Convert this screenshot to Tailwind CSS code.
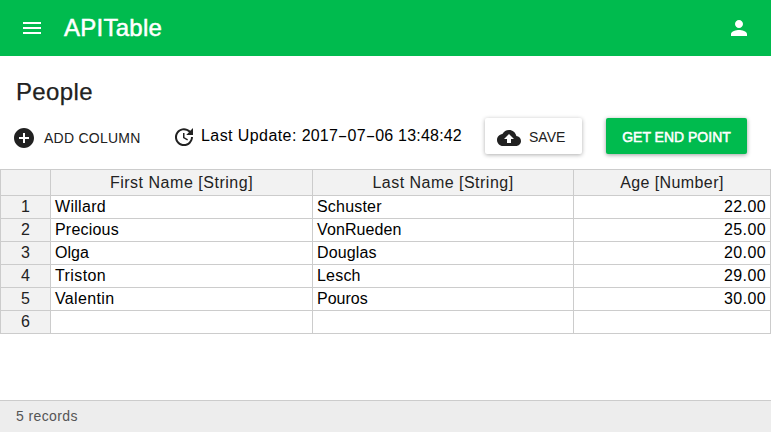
<!DOCTYPE html>
<html lang="en">
<head>
<meta charset="utf-8">
<title>APITable</title>
<script src="https://cdn.jsdelivr.net/npm/@tailwindcss/browser@4"></script>
</head>
<body class="flex h-[432px] w-[771px] flex-col overflow-hidden bg-white font-['Liberation_Sans',sans-serif] text-[#212121]">
<header class="flex h-14 shrink-0 items-center bg-[#00bb4e] pl-5 pr-5 text-white">
  <svg class="size-6" viewBox="0 0 24 24" fill="currentColor"><path d="M3 18h18v-2H3v2zm0-5h18v-2H3v2zm0-7v2h18V6H3z"/></svg>
  <h1 class="ml-5 text-2xl leading-8 tracking-[0.25px] [-webkit-text-stroke:0.5px_white]">APITable</h1>
  <svg class="ml-auto size-6" viewBox="0 0 24 24" fill="currentColor"><path d="M12 12c2.21 0 4-1.79 4-4s-1.79-4-4-4-4 1.790-4 4 1.790 4 4 4zm0 2c-2.670 0-8 1.340-8 4v2h16v-2c0-2.660-5.330-4-8-4z"/></svg>
</header>
<main class="flex grow flex-col">
  <h2 class="mt-5 h-8 pl-4 text-2xl leading-8 tracking-[0.35px] [-webkit-text-stroke:0.25px_#212121]">People</h2>
  <div class="mt-[10px] flex h-9 shrink-0">
    <button class="ml-3 mt-[2px] flex w-[160px] items-center text-sm tracking-[0.25px]"><svg class="mr-2 mt-px size-6" viewBox="0 0 24 24" fill="currentColor"><path d="M12 2C6.480 2 2 6.480 2 12s4.480 10 10 10 10-4.480 10-10S17.520 2 12 2zm5 11h-4v4h-2v-4H7v-2h4V7h2v4h4v2z"/></svg><span class="pt-[2px]">ADD COLUMN</span></button>
    <div class="flex w-[313px] pt-[5px] text-black"><svg class="mr-[5px] mt-[2px] size-6 text-[#212121]" viewBox="0 0 24 24" fill="currentColor"><path d="M21 10.120h-6.780l2.740-2.820c-2.730-2.700-7.150-2.800-9.880-.1-2.730 2.710-2.730 7.080 0 9.790 2.730 2.710 7.150 2.710 9.880 0C18.320 15.650 19 14.080 19 12.100h2c0 1.980-.88 4.550-2.640 6.290-3.510 3.480-9.210 3.480-12.720 0-3.500-3.470-3.530-9.110-.02-12.580 3.510-3.470 9.140-3.470 12.650 0L21 3v7.120zM12.500 8v4.250l3.500 2.080-.72 1.210L11 13V8h1.500z"/></svg><span class="mt-px whitespace-nowrap text-base leading-6 tracking-[0.2px]"><span class="tracking-[0.42px]">Last Update: </span>2017<span class="inline-block w-[9.5px] scale-x-[1.8] text-center">-</span>07<span class="inline-block w-[9.5px] scale-x-[1.8] text-center">-</span>06 13:48:42</span></div>
    <button class="flex w-[97px] items-center rounded-[2px] pl-3 text-sm shadow-[0_1px_4px_rgba(0,0,0,0.32)]"><svg class="mr-2 mt-1 size-6" viewBox="0 0 24 24" fill="currentColor"><path d="M19.350 10.040C18.670 6.590 15.640 4 12 4 9.110 4 6.600 5.640 5.350 8.040 2.340 8.360 0 10.910 0 14c0 3.310 2.690 6 6 6h13c2.760 0 5-2.240 5-5 0-2.640-2.050-4.780-4.650-4.960zM14 13v4h-4v-4H7l5-5 5 5h-3z"/></svg><span class="pt-[2px]">SAVE</span></button>
    <button class="ml-6 flex w-[141px] items-center justify-center rounded-[2px] bg-[#00bb4e] pt-[2px] text-sm text-white shadow-[0_1px_4px_rgba(0,0,0,0.38)] [-webkit-text-stroke:0.5px_white]">GET END POINT</button>
  </div>
  <div class="mt-[15px] grid w-[771px] shrink-0 grid-cols-[50px_262px_261px_198px] grid-rows-[26px_repeat(5,23px)_24px] text-base leading-[21px] text-black [&>div]:border-l [&>div]:border-t [&>div]:border-[#ccc] [&>div:nth-child(4n)]:border-r [&>div:nth-child(n+25)]:border-b [&>div:nth-child(4n+1)]:bg-[#f2f2f2] [&>div:nth-child(4n+1)]:text-center [&>div:nth-child(4n+1)]:text-[#222] [&>div:nth-child(4n+2)]:pl-1 [&>div:nth-child(4n+3)]:pl-1 [&>div:nth-child(4n)]:pr-1 [&>div:nth-child(4n)]:text-right [&>div:nth-child(4n)]:tracking-[0.4px] [&>div:nth-child(-n+4)]:bg-[#f2f2f2] [&>div:nth-child(-n+4)]:text-center! [&>div:nth-child(-n+4)]:text-[#222] [&>div:nth-child(-n+4)]:leading-[26px] [&>div:nth-child(-n+4)]:px-0!">
    <div></div><div class="tracking-[0.52px]">First Name [String]</div><div class="tracking-[0.48px]">Last Name [String]</div><div>Age [Number]</div>
    <div>1</div><div class="tracking-[0.3px]">Willard</div><div class="tracking-[0.2px]">Schuster</div><div>22.00</div>
    <div>2</div><div class="tracking-[0.2px]">Precious</div><div class="tracking-[0.1px]">VonRueden</div><div>25.00</div>
    <div>3</div><div>Olga</div><div class="tracking-[0.15px]">Douglas</div><div>20.00</div>
    <div>4</div><div class="tracking-[0.4px]">Triston</div><div class="tracking-[0.2px]">Lesch</div><div>29.00</div>
    <div>5</div><div class="tracking-[0.35px]">Valentin</div><div>Pouros</div><div>30.00</div>
    <div>6</div><div></div><div></div><div></div>
  </div>
</main>
<footer class="h-8 shrink-0 border-t border-[#ccc] bg-[#ededed] pl-4 text-sm leading-[31px] tracking-[0.4px] text-[#555]">5 records</footer>
</body>
</html>
